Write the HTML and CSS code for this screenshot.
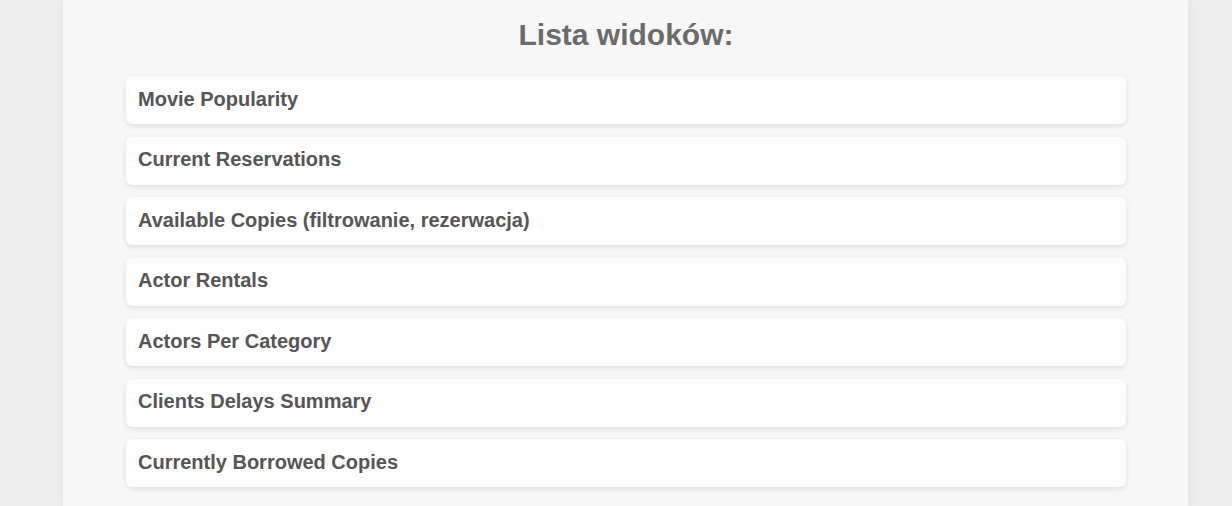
FILE: index.html
```html
<!DOCTYPE html>
<html lang="pl">
<head>
<meta charset="utf-8">
<title>Lista widoków</title>
<link rel="stylesheet" href="styles.css">
</head>
<body>
<div class="page">
  <main class="container">
    <h1 class="title">Lista widoków:</h1>
    <ul class="view-list">
      <li class="view-item">Movie Popularity</li>
      <li class="view-item">Current Reservations</li>
      <li class="view-item">Available Copies (filtrowanie, rezerwacja)</li>
      <li class="view-item">Actor Rentals</li>
      <li class="view-item">Actors Per Category</li>
      <li class="view-item">Clients Delays Summary</li>
      <li class="view-item">Currently Borrowed Copies</li>
    </ul>
  </main>
</div>
</body>
</html>
```
FILE: styles.css
```css
html, body {
  margin: 0;
  padding: 0;
  background: #ededed;
  font-family: "Liberation Sans", Arial, sans-serif;
}
.page {
  padding-left: 63px;
}
.container {
  width: 1125px;
  min-height: 506px;
  box-sizing: border-box;
  background: #f7f7f7;
  box-shadow: 0 0 10px rgba(0, 0, 0, 0.06);
  padding: 18px 62px 20px 63px;
}
.title {
  margin: 0 0 24px 0;
  text-align: center;
  font-size: 30px;
  font-weight: bold;
  color: #6b6b6b;
  line-height: 34px;
}
.view-list {
  list-style: none;
  margin: 0;
  padding: 0;
  display: flex;
  flex-direction: column;
  gap: 12.5px;
}
.view-item {
  background: #fdfdfd;
  border-radius: 6px;
  box-shadow: 0 2px 5px rgba(0, 0, 0, 0.1);
  padding: 11.5px 12px 13.5px;
  line-height: 23px;
  font-size: 20px;
  font-weight: bold;
  color: #555;
}
```
